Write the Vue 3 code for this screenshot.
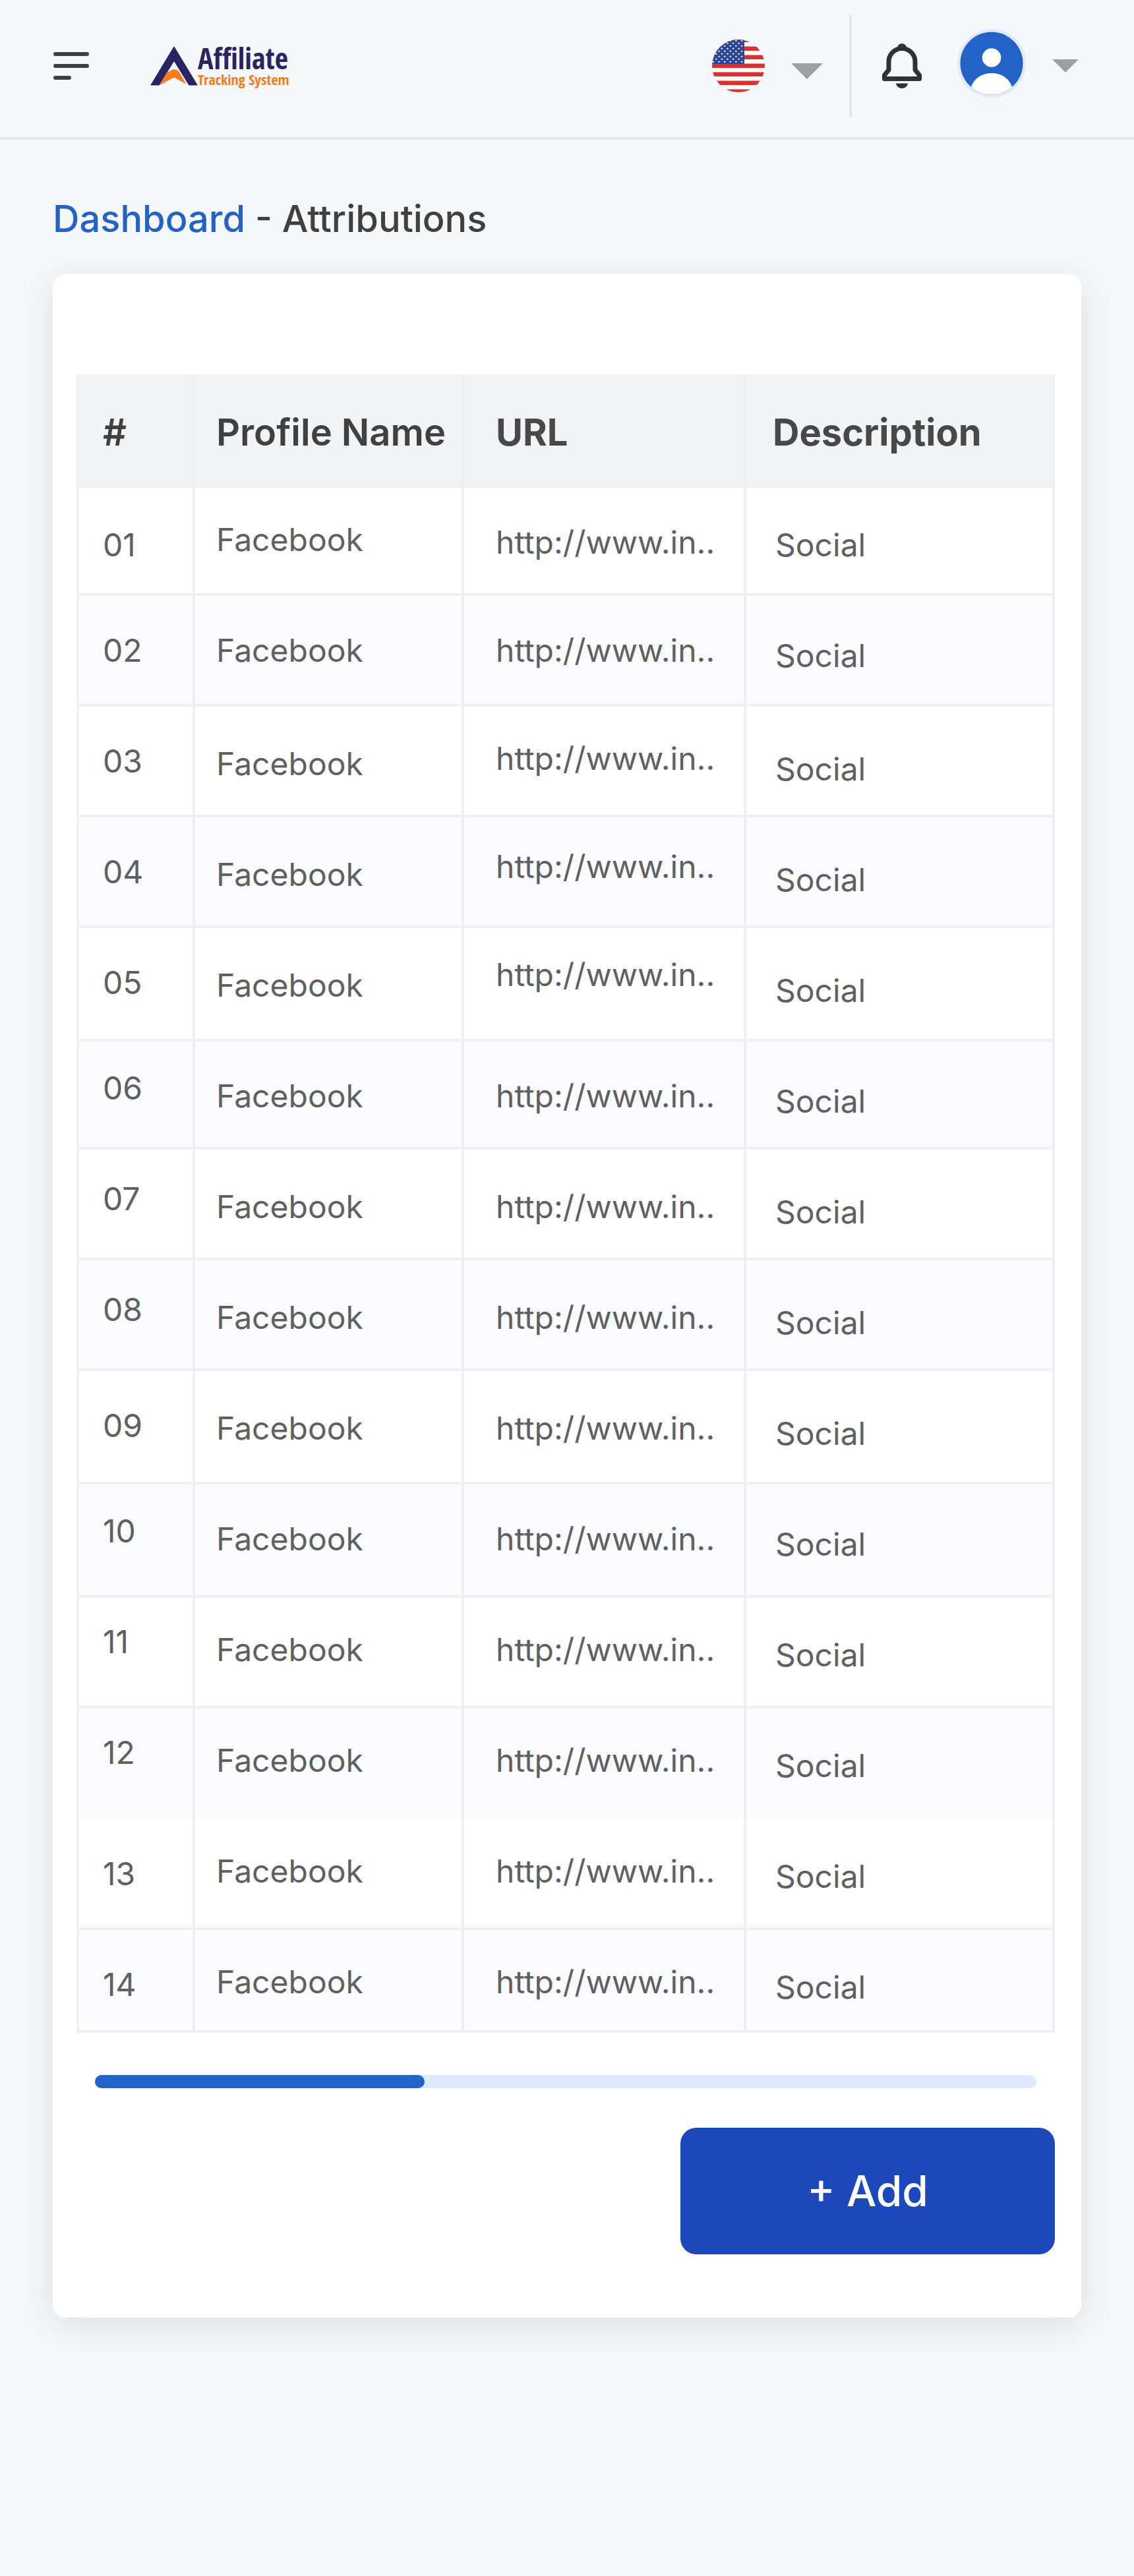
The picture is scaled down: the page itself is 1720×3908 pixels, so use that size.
<script setup>
const columns = [
  { key: 'id', label: '#' },
  { key: 'name', label: 'Profile Name' },
  { key: 'url', label: 'URL' },
  { key: 'description', label: 'Description' },
]

// size: row height class; drops: vertical text step of each cell
const layout = [
  ['short', 6, 4, 5, 6],
  ['', 5, 5, 5, 7],
  ['', 5, 6, 4, 8],
  ['', 5, 6, 3, 8],
  ['tall', 5, 6, 2, 8],
  ['short', 2, 5, 5, 7],
  ['', 3, 6, 6, 8],
  ['', 3, 6, 6, 8],
  ['tall', 5, 6, 6, 8],
  ['tall', 2, 5, 5, 7],
  ['', 1, 4, 4, 6],
  ['open', 1, 4, 4, 6],
  ['banded', 5, 4, 4, 6],
  ['last', 5, 4, 4, 6],
]

const rows = layout.map(([size, ...drops], i) => ({
  id: String(i + 1).padStart(2, '0'),
  name: 'Facebook',
  url: 'http://www.in..',
  description: 'Social',
  size,
  drops,
}))

const scrolled = 35

const stars = []
for (let r = 0; r < 9; r++) {
  for (let c = 0; c < 6; c++) {
    stars.push({ x: 2 + c * 8.6 + (r % 2 ? -4.3 : 0), y: 1.6 + r * 4 })
  }
}
</script>

<template>
  <div class="page">
    <header class="topbar">
      <button class="icon-button menu" type="button" aria-label="Menu">
        <svg width="56" height="42" viewBox="0 0 56 42" fill="#404040">
          <rect x="1" y="0" width="54" height="6" rx="3" />
          <rect x="1" y="18" width="54" height="6" rx="3" />
          <rect x="1" y="36" width="27" height="6" rx="3" />
        </svg>
      </button>

      <a class="logo" href="#" aria-label="Affiliate Tracking System">
        <svg width="72" height="60" viewBox="0 0 72 60">
          <path fill="#2a2560" d="M36 0 72 59.500H58.500L36 23 13.500 59.500H0Z" />
          <path fill="#f47b20" d="M13.500 59.500 24.700 40.500Q30 37 36 35q4 .6 6.800 2.700L54.500 57.500 36 47.500Z" />
        </svg>
        <span class="wordmark">
          <span class="wordmark-top">Affiliate</span>
          <span class="wordmark-bottom">Tracking System</span>
        </span>
      </a>

      <div class="tools">
        <button class="icon-button language" type="button" aria-label="Language">
          <svg width="80" height="80" viewBox="0 0 80 80">
            <defs>
              <clipPath id="flag-round"><circle cx="40" cy="40" r="40" /></clipPath>
            </defs>
            <g clip-path="url(#flag-round)">
              <rect width="80" height="80" fill="#fff" />
              <rect
                v-for="n in 7"
                :key="n"
                x="0"
                :y="(n - 1) * 13 - 2.500"
                width="80"
                height="6.500"
                fill="#dc2f2f"
              />
              <rect width="49" height="37" fill="#2f4596" />
              <path
                v-for="(s, i) in stars"
                :key="'s' + i"
                :transform="`translate(${s.x} ${s.y})`"
                fill="#fff"
                d="M0-1.700.5-.5 1.700-.5.800.3 1.200 1.500 0 .8-1.200 1.500-.8.300-1.700-.5-.5-.5Z"
              />
            </g>
          </svg>
          <svg class="language-caret" width="48" height="24" viewBox="0 0 48 24">
            <path fill="#a0a0a0" d="M0 0H48L24 24Z" />
          </svg>
        </button>

        <span class="divider"></span>

        <button class="icon-button" type="button" aria-label="Notifications">
          <svg width="72" height="72" viewBox="0 0 72 72">
            <path
              fill="none"
              stroke="#303134"
              stroke-width="7"
              stroke-linejoin="round"
              d="M16 42V29.500a20 20 0 0 1 40 0V42l6.500 8v5.500h-53V50Z"
            />
            <path fill="#303134" d="M29 8.500a7 6.500 0 0 1 14 0Z" />
            <path fill="#303134" d="M27 62.500H45A9 7.500 0 0 1 27 62.500Z" />
          </svg>
        </button>

        <button class="icon-button account" type="button" aria-label="Account">
          <svg width="104" height="112" viewBox="0 0 104 112">
            <defs>
              <clipPath id="avatar-round"><circle cx="52" cy="52" r="47.500" /></clipPath>
            </defs>
            <circle cx="52" cy="52" r="52" fill="#e0e9fd" />
            <g clip-path="url(#avatar-round)">
              <rect width="104" height="104" fill="#2362c6" />
              <circle cx="52" cy="43.500" r="14.300" fill="#fff" />
              <path fill="#fff" d="M21 88C25 75 37 67 52 67S79 75 83 88L78 104H26Z" />
            </g>
          </svg>
          <svg width="40" height="20" viewBox="0 0 40 20">
            <path fill="#a0a0a0" d="M0 0H40L20 20Z" />
          </svg>
        </button>
      </div>
    </header>

    <main class="content">
      <nav class="breadcrumb" aria-label="Breadcrumb">
        <a href="#">Dashboard</a> - Attributions
      </nav>

      <section class="card">
        <table class="grid">
          <colgroup>
            <col class="col-id" />
            <col class="col-name" />
            <col class="col-url" />
            <col />
          </colgroup>
          <thead>
            <tr>
              <th v-for="c in columns" :key="c.key" :class="c.key" scope="col">{{ c.label }}</th>
            </tr>
          </thead>
          <tbody>
            <tr v-for="row in rows" :key="row.id" :class="row.size">
              <td v-for="(c, i) in columns" :key="c.key" :class="[c.key, 'drop-' + row.drops[i]]">
                {{ row[c.key] }}
              </td>
            </tr>
          </tbody>
        </table>

        <div class="scroll-track">
          <div class="scroll-thumb" :style="{ width: scrolled + '%' }"></div>
        </div>

        <button class="add" type="button">+ Add</button>
      </section>
    </main>
  </div>
</template>

<style>
html {
  background: #f4f8fb;
}
</style>

<style scoped>
.page {
  font-family: Inter, "Liberation Sans", sans-serif;
  color: #404040;
}

.topbar {
  box-sizing: border-box;
  height: 212px;
  padding: 0 84px 8px 80px;
  border-bottom: 4px solid #e5e5e5;
  display: flex;
  align-items: center;
}

.icon-button {
  display: flex;
  align-items: center;
  padding: 0;
  border: 0;
  background: none;
  cursor: pointer;
}

.icon-button svg {
  display: block;
}

.logo {
  display: flex;
  align-items: center;
  margin-left: 92px;
  text-decoration: none;
}

.wordmark {
  display: flex;
  flex-direction: column;
  font-family: "Open Sans Condensed", "Liberation Sans", sans-serif;
  white-space: nowrap;
}

.wordmark-top {
  font-size: 44px;
  line-height: 40px;
  font-weight: 700;
  color: #2a2560;
}

.wordmark-bottom {
  font-size: 22px;
  line-height: 24px;
  font-weight: 300;
  color: #f47b20;
}

.tools {
  display: flex;
  align-items: center;
  margin-left: auto;
}

.language {
  gap: 40px;
}

.language-caret {
  margin-top: 16px;
}

.divider {
  width: 4px;
  height: 156px;
  margin: 0 40px;
  background: #e5e5e5;
}

.account {
  gap: 40px;
  margin-left: 48px;
}

.content {
  padding: 84px 80px 80px;
}

.breadcrumb {
  font-size: 56px;
  line-height: 72px;
  font-weight: 500;
}

.breadcrumb a {
  color: #2362c6;
  text-decoration: none;
}

.card {
  display: flex;
  flex-direction: column;
  margin-top: 48px;
  padding: 152px 40px 96px 36px;
  border-radius: 20px;
  background: #fff;
  box-shadow: 0 12px 56px rgba(0, 0, 0, 0.1);
}

.grid {
  width: 100%;
  table-layout: fixed;
  border-collapse: separate;
  border-spacing: 0;
}

.col-id {
  width: 180px;
}

.col-name {
  width: 408px;
}

.col-url {
  width: 428px;
}

th,
td {
  box-sizing: border-box;
  padding: 0;
  border: 0 solid #efefef;
  border-width: 0 4px 4px 0;
  text-align: left;
  vertical-align: top;
  white-space: nowrap;
}

th {
  height: 172px;
  padding-top: 52px;
  background: #f1f4f7;
  font-size: 56px;
  line-height: 72px;
  font-weight: 700;
  color: #484848;
}

th.id,
th.name {
  font-weight: 600;
  color: #404040;
}

td {
  height: 168px;
  font-size: 48px;
  line-height: 56px;
  color: #606060;
}

.id {
  padding-left: 36px;
  border-left-width: 4px;
}

.name {
  padding-left: 32px;
}

.url {
  padding-left: 48px;
}

.description {
  padding-left: 40px;
}

td.description {
  padding-left: 44px;
}

tbody tr:nth-child(even) {
  background: #fafbff;
}

.short td {
  height: 164px;
}

.tall td {
  height: 172px;
}

.last td {
  height: 156px;
}

.open td {
  border-bottom-width: 0;
}

.banded td {
  box-shadow: inset 0 -8px #fafbff;
}

.drop-1 {
  padding-top: 39px;
}

.drop-2 {
  padding-top: 43px;
}

.drop-3 {
  padding-top: 47px;
}

.drop-4 {
  padding-top: 51px;
}

.drop-5 {
  padding-top: 55px;
}

.drop-6 {
  padding-top: 59px;
}

.drop-7 {
  padding-top: 63px;
}

.drop-8 {
  padding-top: 67px;
}

.scroll-track {
  height: 20px;
  margin: 64px 28px 0;
  border-radius: 10px;
  background: #dde9fc;
}

.scroll-thumb {
  height: 100%;
  border-radius: 10px;
  background: #2362c6;
}

.add {
  align-self: flex-end;
  width: 568px;
  height: 192px;
  margin-top: 60px;
  padding: 0;
  border: 0;
  border-radius: 24px;
  background: #1c48bb;
  color: #fff;
  font-family: inherit;
  font-size: 64px;
  line-height: 80px;
  font-weight: 500;
  cursor: pointer;
}
</style>
